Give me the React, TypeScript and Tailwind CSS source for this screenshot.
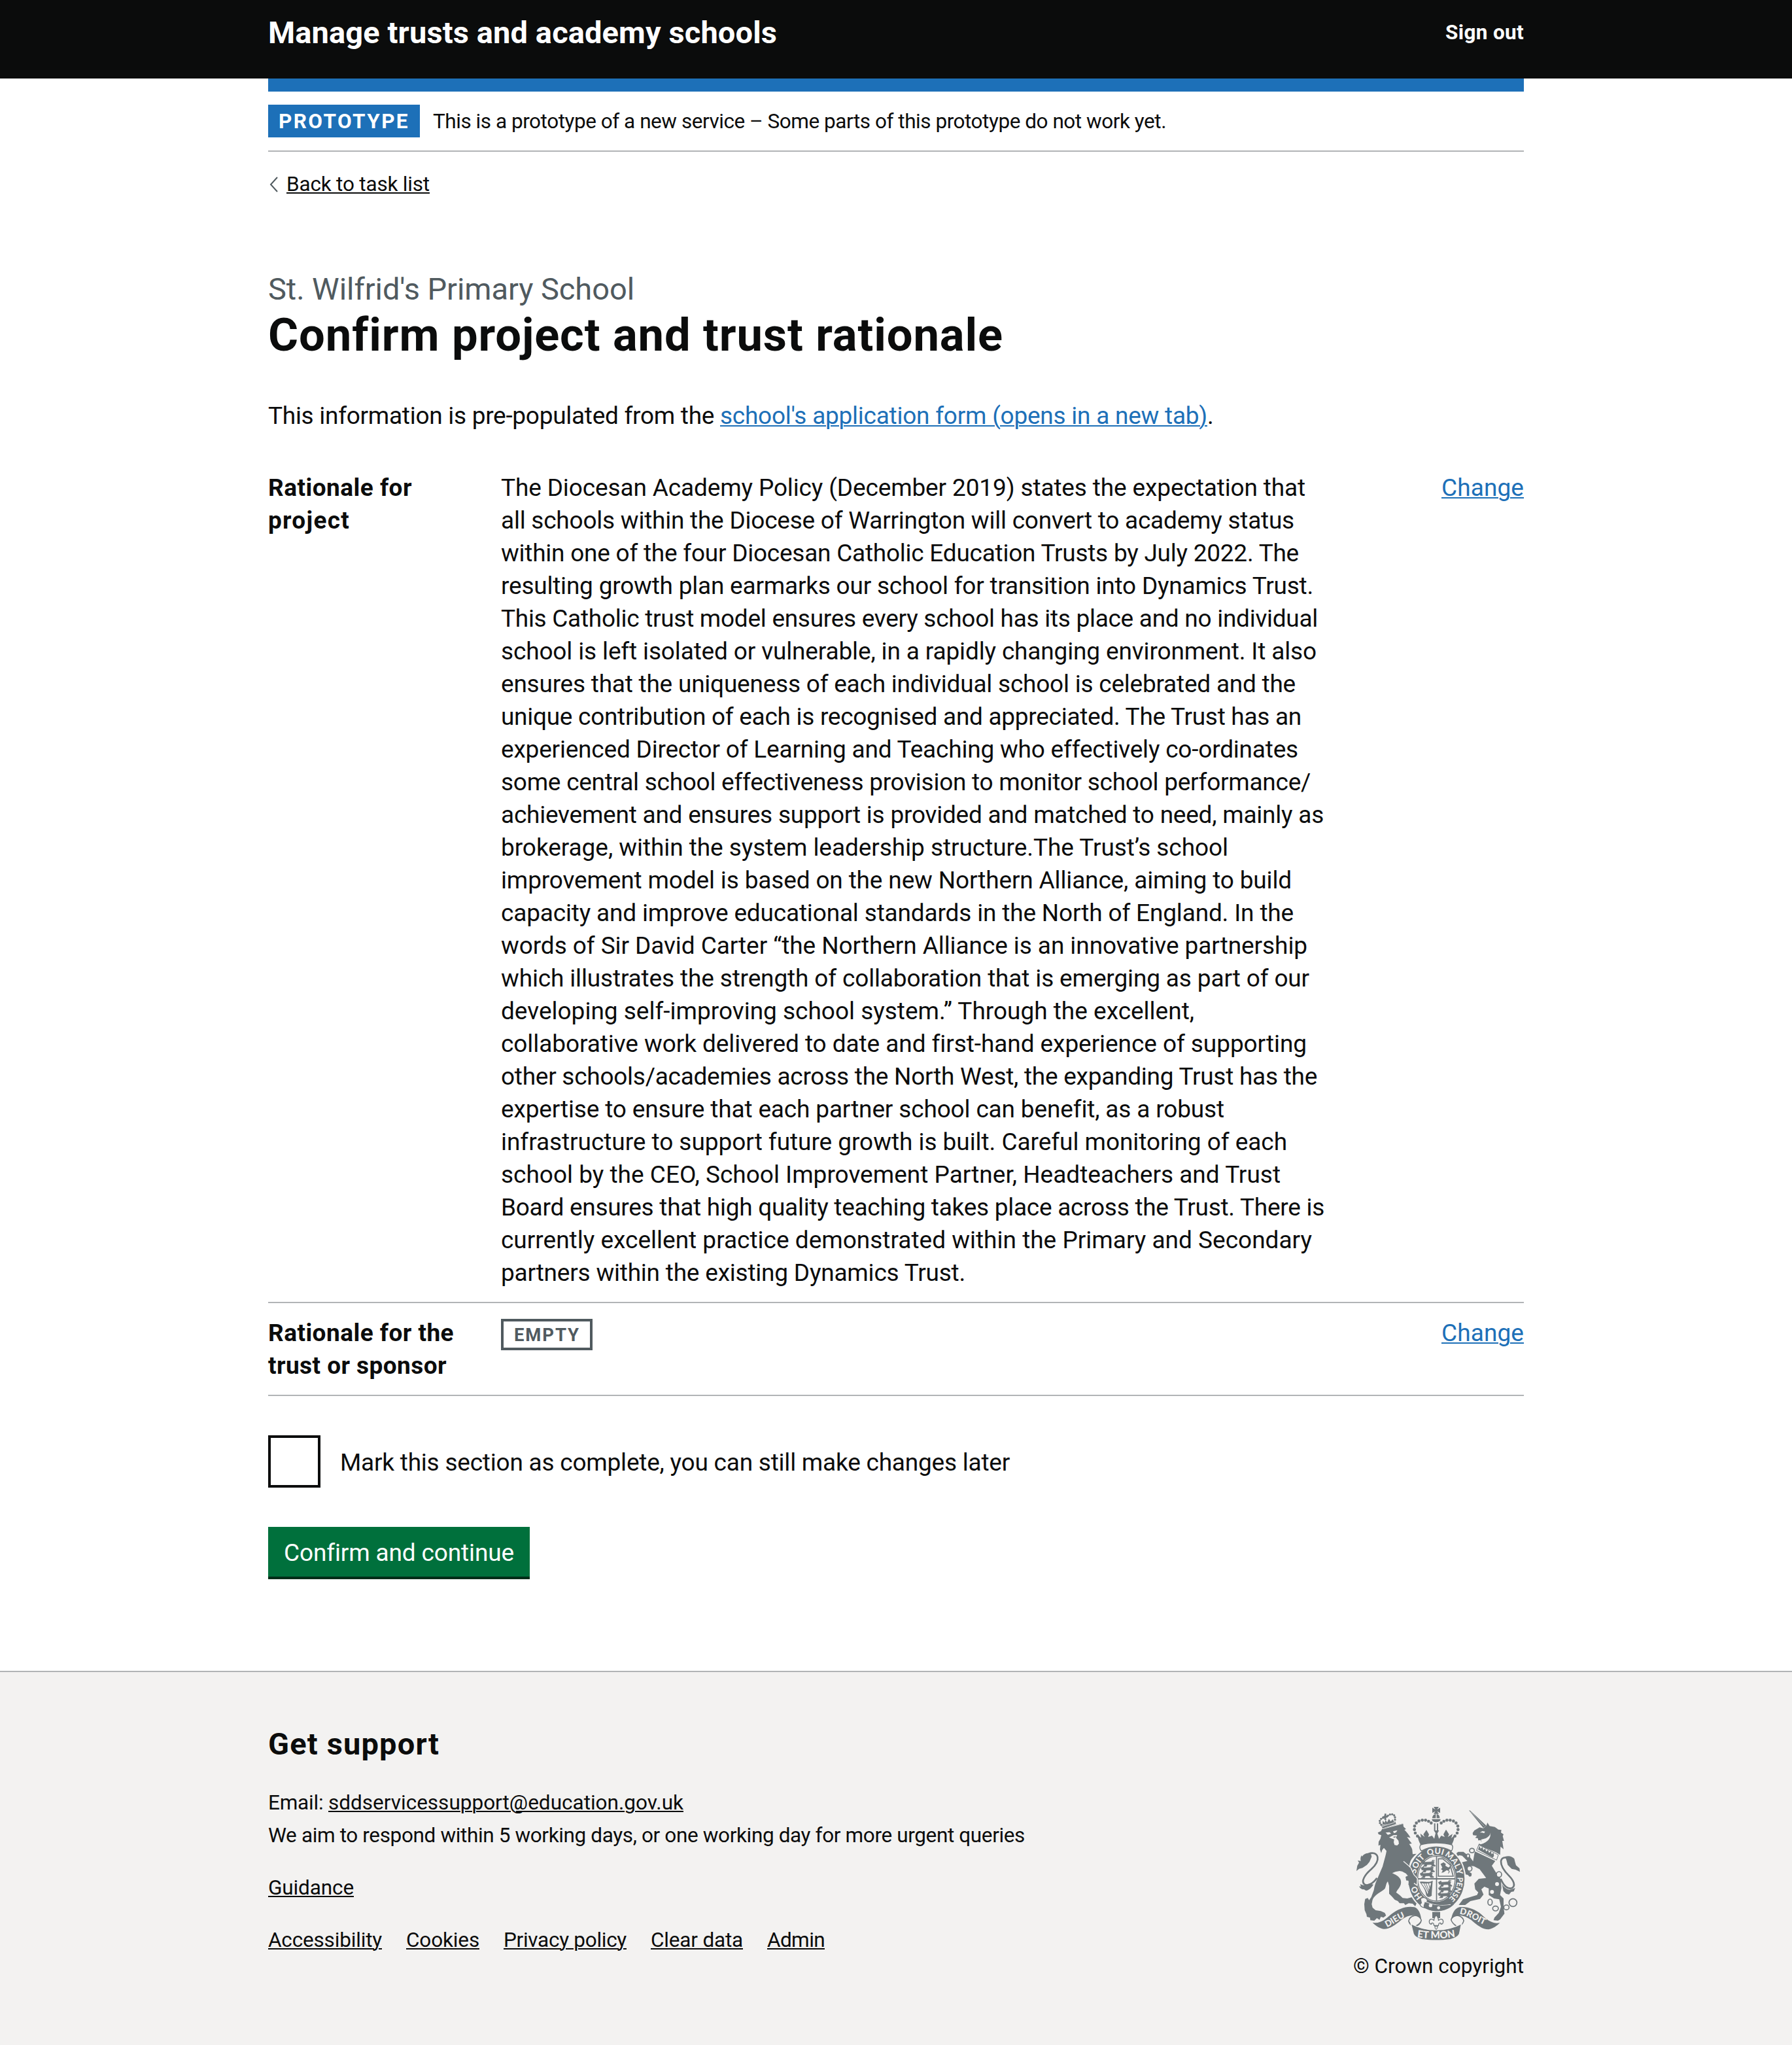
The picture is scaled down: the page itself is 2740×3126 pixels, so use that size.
import { useLayoutEffect, useRef, type ReactNode } from "react";

type FitProps = { w: number; className?: string; href?: string; children: string };

/** A single line of text whose letter spacing is tuned so that it spans `w` pixels. */
function Fit({ w, className = "", href, children }: FitProps) {
  const ref = useRef<HTMLElement | null>(null);
  useLayoutEffect(() => {
    const el = ref.current;
    if (!el) return;
    el.style.letterSpacing = "0px";
    const natural = el.getBoundingClientRect().width;
    el.style.letterSpacing = `${(w - natural) / children.length}px`;
  }, [w, children]);
  const Tag = (href ? "a" : "span") as "a";
  return (
    <Tag
      ref={(el: HTMLElement | null) => {
        ref.current = el;
      }}
      href={href}
      className={`inline-block whitespace-pre [font-variant-ligatures:none] ${className}`}
    >
      {children}
    </Tag>
  );
}

const LINK = "underline decoration-2 underline-offset-[2px]";

const RATIONALE: [string, number][] = [
  ["The Diocesan Academy Policy (December 2019) states the expectation that", 1230],
  ["all schools within the Diocese of Warrington will convert to academy status", 1213],
  ["within one of the four Diocesan Catholic Education Trusts by July 2022. The", 1220],
  ["resulting growth plan earmarks our school for transition into Dynamics Trust.", 1242],
  ["This Catholic trust model ensures every school has its place and no individual", 1249],
  ["school is left isolated or vulnerable, in a rapidly changing environment. It also", 1247],
  ["ensures that the uniqueness of each individual school is celebrated and the", 1215],
  ["unique contribution of each is recognised and appreciated. The Trust has an", 1224],
  ["experienced Director of Learning and Teaching who effectively co-ordinates", 1219],
  ["some central school effectiveness provision to monitor school performance/", 1238],
  ["achievement and ensures support is provided and matched to need, mainly as", 1258],
  ["brokerage, within the system leadership structure.The Trust’s school", 1112],
  ["improvement model is based on the new Northern Alliance, aiming to build", 1209],
  ["capacity and improve educational standards in the North of England. In the", 1212],
  ["words of Sir David Carter “the Northern Alliance is an innovative partnership", 1233],
  ["which illustrates the strength of collaboration that is emerging as part of our", 1236],
  ["developing self-improving school system.” Through the excellent,", 1060],
  ["collaborative work delivered to date and first-hand experience of supporting", 1232],
  ["other schools/academies across the North West, the expanding Trust has the", 1248],
  ["expertise to ensure that each partner school can benefit, as a robust", 1106],
  ["infrastructure to support future growth is built. Careful monitoring of each", 1202],
  ["school by the CEO, School Improvement Partner, Headteachers and Trust", 1192],
  ["Board ensures that high quality teaching takes place across the Trust. There is", 1259],
  ["currently excellent practice demonstrated within the Primary and Secondary", 1240],
  ["partners within the existing Dynamics Trust.", 710],
];

const FOOTER_LINKS: [string, number][] = [
  ["Accessibility", 174],
  ["Cookies", 112],
  ["Privacy policy", 188],
  ["Clear data", 141],
  ["Admin", 88],
];

function Row({ label, value, children }: { label: [string, number][]; value: string; children: ReactNode }) {
  return (
    <div className="flex border-b-2 border-[#b1b4b6] pt-px pb-[19px]">
      <dt className="flex w-[356px] flex-col items-start font-bold">
        {label.map(([t, w]) => (
          <Fit key={t} w={w}>
            {t}
          </Fit>
        ))}
      </dt>
      <dd className="flex flex-1 flex-col items-start">{children}</dd>
      <dd>
        <Fit w={126} href="#" className={`text-[#1d70b8] ${LINK}`}>
          {value}
        </Fit>
      </dd>
    </div>
  );
}

/** Beads of the imperial crown's arches. */
const BEADS: [number, number][] = [
  [382, 200], [372, 186], [368, 170], [369, 154], [377, 140], [389, 131], [404, 127], [419, 127], [433, 132], [445, 140],
];
/** Beads of the crown worn by the lion. */
const SMALL_BEADS: [number, number][] = [
  [216, 148], [210, 140], [209, 130], [215, 121], [224, 116], [247, 106], [256, 101], [266, 100], [275, 105], [279, 114], [279, 125],
];

function LionPassant({ x, y }: { x: number; y: number }) {
  return (
    <path
      transform={`translate(${x} ${y})`}
      d="M0 4l8-4 6 4 30-2 8-3 6 4-4 3 2 10 6 2 0 4h-14l-4-8-20 1-3 8H6l6-5 1-6-8 2zM8 1l3-4 3 5M10 15h12M40 14h12M44 0l6-6 10 2"
      stroke="#6f777b"
      strokeWidth={2}
    />
  );
}

function RoyalArms() {
  const bg = "#f3f2f1";
  const fg = "#6f777b";
  return (
    <svg viewBox="96 60 768 624" className="h-[208px] w-[256px]" fill={fg} aria-hidden="true">
      {/* Lion */}
      <path d="M222 164L316 142L318 157L330 168L322 171C334 184 343 194 350 208L334 204C342 216 349 225 356 234L344 236C351 245 356 254 358 262L360 283L378 281C366 291 356 302 350 314L345 330L372 382L376 415L361 409L354 408L352 424L340 424L343 408L332 404L328 388L338 384L330 372L312 362L300 360L280 364L266 370C280 376 296 384 304 398C310 414 306 430 290 448L284 458L300 470L314 484L335 486L358 480L374 488L388 500L388 516L378 508L372 522L360 510L342 508L326 516L320 508L300 508L292 498L278 492L264 476L252 464L252 428L246 408C238 414 238 432 232 442C214 458 186 468 176 492L172 512L176 528L190 540L214 544L232 552L238 564L226 574L214 570L208 584L196 576L184 588L166 586L164 574L150 570L148 558L140 540L138 512L142 488L154 484L160 494L170 480L182 448C184 428 192 408 202 386L222 340C230 310 236 292 240 268L228 254L220 264L216 278L210 262L212 240L203 244L204 226L212 212L216 196L204 192L200 184L214 178Z" />
      <g fill={bg}>
        <path d="M236 184l18-2 7 7-15 5zM270 178l20-5-6 10-10 4zM252 206l20-10 17-1-6 12 12 14 2 14-8 8-12-2-4-12 2-14-12-4z" />
      </g>
      <path d="M268 204l16-4-6 8z" />
      {/* Lion's crown */}
      <g>
        <path d="M216 153l64-20 4 12-62 19z" />
        <path d="M222 148l0-18 10 9 3-14 8 12 8-16 8 12 10-10 7 16zM232 96l8 2-2 8 8 0 0 8-8 2 1 10-8 0-2-9-8 0 0-7 8-2z" />
        {SMALL_BEADS.map(([x, y]) => (
          <circle key={`${x}-${y}`} cx={x} cy={y} r={5} />
        ))}
        <path d="M219 156l60-19" stroke={bg} strokeWidth={2.5} />
        <path d="M222 167L318 142" stroke={bg} strokeWidth={2.5} />
      </g>
      {/* Lion's tail */}
      <path
        d="M196 392c-18 26-42 38-56 30-20-14 2-46 30-70 26-24 32-40 29-56-4-18-24-22-42-14"
        fill="none"
        stroke={fg}
        strokeWidth={8}
      />
      <path d="M168 280c-16-4-30 0-40 14l-2-6c-6 8-6 18-4 26l-14-2 6 10-8 14-4 24 12-10 16-4 20-14 12-14 10-24zM160 418c-16 12-30 8-40 2l2 12-8-2c4 10 14 16 22 14l10 6c14-2 26-14 34-28z" />

      {/* Unicorn */}
      <path d="M618 82l6 1 74 69-14 11z" />
      <path d="M626 88l62 66" stroke={bg} strokeWidth={1.5} />
      <path d="M684 164l14-12 5-14 10 16 24 4 16 12 14 2-2 12 12 8-4 8 6 22-8 0 6 38-14-12-2 38-24-14-50-20-26-14 14-10-2-10-12 2-2-10-12-2 8-10-18-2-2-10 8-12 24-14z" />
      <path d="M716 186c4 22-10 42-44 52l-8-4 2-8 10 0-2-10 22-6c12-6 18-14 22-24zM668 184l12-7 12 2-4 8-10-3z" fill={bg} />
      <path d="M663 240l90 46-8 24-92-44z" fill={bg} stroke={fg} strokeWidth={3} />
      <path d="M660 262l6-18 6 14 8-8 4 14 9-7 4 14 9-8 4 14 9-8 3 14 9-6 2 14-6 8z" />
      <path d="M645 270l94 44-16 22 16 26 26 36 2 40-6 32 16 16v40l4 30-20 26-10 6-20-2 4-12 20-22 10-28-8-34-24-4-24-16v-30l-20-8-14 12 10 24-16 20-44 10-24 18-30 0 20-26 64-20 6-12-14-14-4-26 20-22 34-4-12-16-18-24-26-14-22-2-10 10 6 14 16 12-2 12-8 2-8-8-10-2-10-24-12-18 4-14 26-6-24-24-12-2-10 4-4-14 8-6 24 0 30 24 14 20z" />
      <g fill={bg} stroke={fg} strokeWidth={5}>
        <ellipse cx="632" cy="266" rx="11" ry="10" />
        <ellipse cx="614" cy="291" rx="7" ry="9" />
        <ellipse cx="621" cy="349" rx="11" ry="12" />
        <ellipse cx="756" cy="376" rx="12" ry="13" />
        <ellipse cx="715" cy="503" rx="10" ry="14" />
        <ellipse cx="740" cy="532" rx="13" ry="11" />
        <ellipse cx="790" cy="527" rx="12" ry="11" />
        <circle cx="820" cy="505" r="18" />
      </g>
      <g fill={bg}>
        <circle cx="747" cy="420" r="9" />
        <circle cx="724" cy="456" r="9" />
      </g>
      {/* Unicorn's tail */}
      <path
        d="M764 396c14 34 34 50 52 42 18-10 6-36-14-56-24-24-38-44-37-66 2-18 20-22 36-14"
        fill="none"
        stroke={fg}
        strokeWidth={8}
      />
      <path d="M784 294c18-6 34 0 42 10l4 16 4 14 16 14 2 16-20-10-18-4-18-18-6-22zM770 420c8 14 20 24 34 26l10-2 16-6-6 16-12 2-10 12-14-4-12-12z" />

      {/* Garter */}
      <ellipse cx="469" cy="396" rx="135" ry="154" fill={bg} />
      <ellipse cx="469" cy="396" rx="129" ry="148" />
      <ellipse cx="469" cy="395" rx="90" ry="107" fill={bg} />
      <ellipse cx="469" cy="395" rx="86" ry="103" fill={bg} stroke={fg} strokeWidth={4} />
      <path d="M467 292h5v204h-5zM383 393h172v6H383z" />
      {/* Quarters */}
      <LionPassant x={402} y={316} />
      <LionPassant x={398} y={342} />
      <LionPassant x={394} y={368} />
      <LionPassant x={478} y={408} />
      <LionPassant x={478} y={434} />
      <LionPassant x={476} y={460} />
      <path d="M478 304h20l34 28 14 52h-68z" fill="none" stroke={fg} strokeWidth={5} />
      <path d="M488 328l14-8 10 8-2 8 14 8 10-8-2 14-6 4 4 10-8 10 4-14-10-4-14 10-10 2 6-10-8-6 6-8z" />
      <path d="M392 410c20-4 40 6 60-6l-6 70c-10 8-20 6-24-4-4-26-14-38-30-60zm8 6c10 14 22 28 28 50l18-52c-14 6-30 2-46 2z" />
      <path d="M410 414l22 44M420 414l16 40M432 414l8 28M446 414v60" stroke={fg} strokeWidth={3} />
      {/* Motto */}
      <path id="garter" pathLength={100} fill="none" d="M469 508A96 113 0 0 1 469 282A96 113 0 0 1 469 508" />
      <g fill={bg} fontFamily="Lato, sans-serif" fontWeight={900} fontSize={38} textAnchor="middle">
        <text><textPath href="#garter" startOffset="15.5%">HO</textPath></text>
        <text><textPath href="#garter" startOffset="35%">SOIT</textPath></text>
        <text><textPath href="#garter" startOffset="49.3%">QUI</textPath></text>
        <text><textPath href="#garter" startOffset="62%">MAL</textPath></text>
        <text><textPath href="#garter" startOffset="70.5%">Y</textPath></text>
        <text fontSize={35}><textPath href="#garter" startOffset="82.3%">PENSE</textPath></text>
      </g>
      {/* Buckle */}
      <path d="M396 488c10-12 26-6 32 6l-6 14c-8 2-12 12-8 20-12 0-20-8-20-16l6-6z" fill={bg} stroke={fg} strokeWidth={4} />
      <path d="M418 500c30 16 70 22 116 14" fill="none" stroke={bg} strokeWidth={3} />
      <path d="M416 502c36 18 80 18 118 14l16-4c-20 22-50 32-80 32-24 0-44-8-60-22z" />
      <g fill={bg}>
        <circle cx="442" cy="518" r="8" />
        <circle cx="479" cy="529" r="7" />
      </g>
      {/* Lion's forepaw, resting on the garter */}
      <path d="M324 326L350 346L364 378L380 396L378 424L366 414L358 408L352 428L340 422L344 406L330 402L328 386L338 382L326 362Z" />
      <path d="M318 316L350 343L366 377L382 395L380 426L366 416" fill="none" stroke={bg} strokeWidth={4} />

      {/* Imperial crown */}
      <path d="M383 194l16 14-4-20 20 16-6-12 14-20 12 20-4 12 18-6 10 14 6-26-8-12h24l-8 14 8 24 10-14 16 6-6-12 12-22 14 22-6 12 22-14-6 20 16-16c-2 20-8 34-14 46-40-10-100-10-142 0-8-14-14-30-14-42z" />
      <path d="M396 240c40-12 104-12 144 0 6 8 4 18-2 28-46-24-94-24-138 0-8-8-8-20-4-28z" fill={bg} stroke={fg} strokeWidth={4} />
      {BEADS.map(([x, y]) => (
        <g key={x + y * 1000}>
          <circle cx={x} cy={y} r={7} />
          <circle cx={936 - x} cy={y} r={7} />
        </g>
      ))}
      <path d="M458 142h6v32h-6zM471 142h6v32h-6zM448 122h40c0 18-40 18-40 0zM450 118c0-10 6-18 16-19v19zM484 118c0-10-4-18-14-19v19zM456 66h24l-8 12 14-8v24l-14-8 8 12h-24l8-12-14 8V70l14 8z" />

      {/* Scrolls */}
      <path d="M176 596c34 8 58-14 86-38 30-24 72-40 106-32 20 6 30 34 32 62-8 16-18 24-30 30-14-4-28-14-30-28 2-16 18-24 34-26-24-4-44 4-66 20-28 24-54 42-80 42-22-4-40-16-52-30z" />
      <path d="M374 565c12 4 22 10 24 22-6 12-18 20-28 24-12-4-24-12-26-22 2-12 16-22 30-24z" fill={bg} />
      <path d="M372 564c-20 2-30 14-30 26 4 14 16 22 28 26 16-6 28-16 30-30-4-12-14-20-28-22z" fill="none" stroke={fg} strokeWidth={4} />
      <path d="M760 598c-36 6-58-14-86-40-28-22-64-36-100-32-22 6-32 28-38 58 8 16 18 26 32 32 14-4 26-14 28-28-2-14-14-22-30-24 22-2 42 6 62 20 28 24 52 44 80 44 20-4 38-16 52-30z" />
      <path d="M564 565c-12 4-22 8-26 20 6 14 18 22 30 28 12-4 22-12 24-24-2-12-14-22-28-24z" fill={bg} />
      <path d="M566 564c-18 2-28 10-30 20 6 16 18 26 30 32 16-6 26-16 28-28-2-12-14-22-28-24z" fill="none" stroke={fg} strokeWidth={4} />
      <path d="M352 602c70 38 162 38 232 0l-10 48c-8 14-24 20-40 24-42 6-90 6-132 0-16-4-32-12-38-24z" stroke={bg} strokeWidth={4} />
      <path id="dieu" fill="none" d="M242 618C280 602 305 570 372 560" />
      <path id="etmon" fill="none" d="M362 660Q469 680 574 658" />
      <path id="droit" fill="none" d="M574 558C620 560 650 596 726 622" />
      <g fill={bg} fontFamily="Lato, sans-serif" fontWeight={900}>
        <text fontSize={40}><textPath href="#dieu">DIEU</textPath></text>
        <text fontSize={45} textAnchor="middle"><textPath href="#etmon" startOffset="50%">ET MON</textPath></text>
        <text fontSize={40}><textPath href="#droit">DROIT</textPath></text>
      </g>
      {/* Fleur-de-lis */}
      <path d="M450 548h36v28h-36z" />
      <path
        d="M468 562c-8 10-12 18-10 26-8-12-22-8-22 4 0 8 4 12 10 12 0-6 6-8 10-2l2 8h20l2-8c4-6 10-4 10 2 6 0 10-4 10-12 0-12-14-16-22-4 2-8-2-16-10-26zM460 610l8 16 8-16"
        fill={bg}
        stroke={fg}
        strokeWidth={4}
      />
      <circle cx="468" cy="620" r="6" fill={bg} stroke={fg} strokeWidth={3} />
    </svg>
  );
}

export default function App() {
  return (
    <div className="flex min-h-[3126px] w-full flex-col bg-white font-['Roboto',sans-serif] text-[37px] leading-[50px] text-[#0b0c0c]">
      <header className="h-[120px] bg-[#0b0c0c] text-white">
        <div className="mx-auto flex w-[1920px] items-start justify-between pt-[25px] font-bold">
          <Fit w={778} className="text-[47px]">
            Manage trusts and academy schools
          </Fit>
          <Fit w={120} href="#" className="text-[31.5px]">
            Sign out
          </Fit>
        </div>
      </header>

      <div className="mx-auto w-[1920px]">
        <div className="h-5 bg-[#1d70b8]" />
        <div className="flex h-[92px] items-start gap-[20px] border-b-2 border-[#b1b4b6] pt-5 text-[31.5px]">
          <strong className="flex h-[50px] w-[232px] bg-[#1d70b8] pt-px pl-4 text-white">
            <Fit w={200}>PROTOTYPE</Fit>
          </strong>
          <Fit w={1121} className="mt-px">
            This is a prototype of a new service – Some parts of this prototype do not work yet.
          </Fit>
        </div>

        <div className="flex items-center gap-[13px] pt-[30px] pl-[2px] text-[31.5px] leading-10">
          <svg viewBox="0 0 13 24" className="h-6 w-[13px]" fill="none" stroke="#505a5f" strokeWidth="2">
            <path d="M12 1L2 12l10 11" />
          </svg>
          <Fit w={219} href="#" className={LINK}>
            Back to task list
          </Fit>
        </div>

        <main>
          <h1 className="mt-[110px] flex flex-col items-start">
            <Fit w={560} className="text-[47px] leading-[60px] text-[#505a5f]">
              St. Wilfrid's Primary School
            </Fit>
            <Fit w={1124} className="mt-[2px] text-[70.5px] leading-[76px] font-bold">
              Confirm project and trust rationale
            </Fit>
          </h1>

          <p className="mt-[61px] whitespace-nowrap">
            <Fit w={691}>{"This information is pre-populated from the "}</Fit>
            <Fit w={745} href="#" className={`text-[#1d70b8] ${LINK}`}>
              school's application form (opens in a new tab)
            </Fit>
            .
          </p>

          <dl className="mt-[59px] flex flex-col gap-5">
            <Row label={[["Rationale for", 220], ["project", 125]]} value="Change">
              {RATIONALE.map(([t, w]) => (
                <Fit key={t} w={w}>
                  {t}
                </Fit>
              ))}
            </Row>
            <Row label={[["Rationale for the", 284], ["trust or sponsor", 273]]} value="Change">
              <strong className="mt-[3px] flex h-12 w-[140px] border-4 border-[#505a5f] pt-px pl-4 text-[27.5px] leading-10 text-[#505a5f]">
                <Fit w={101}>EMPTY</Fit>
              </strong>
            </Row>
          </dl>

          <label className="mt-[60px] flex h-20 items-start gap-[30px]">
            <span className="h-20 w-20 border-4 border-[#0b0c0c]" />
            <Fit w={1024} className="mt-[17px]">
              Mark this section as complete, you can still make changes later
            </Fit>
          </label>

          <button className="mt-[60px] flex h-20 w-[400px] items-start border-b-4 border-[#002d18] bg-[#00703c] pt-[15px] pl-6 text-white">
            <Fit w={352}>Confirm and continue</Fit>
          </button>
        </main>
      </div>

      <footer className="mt-[140px] flex-1 border-t-2 border-[#b1b4b6] bg-[#f3f2f1] text-[31.5px]">
        <div className="mx-auto flex w-[1920px] justify-between">
          <div className="pt-[85px]">
            <h2 className="flex">
              <Fit w={262} className="text-[47px] font-bold">
                Get support
              </Fit>
            </h2>
            <ul className="mt-[40px]">
              <li className="flex">
                <Fit w={92}>{"Email: "}</Fit>
                <Fit w={543} href="#" className={LINK}>
                  sddservicessupport@education.gov.uk
                </Fit>
              </li>
              <li className="flex">
                <Fit w={1157}>We aim to respond within 5 working days, or one working day for more urgent queries</Fit>
              </li>
            </ul>
            <div className="mt-[30px] flex">
              <Fit w={131} href="#" className={LINK}>
                Guidance
              </Fit>
            </div>
            <div className="mt-[30px] flex gap-[37px]">
              {FOOTER_LINKS.map(([t, w]) => (
                <Fit key={t} w={w} href="#" className={LINK}>
                  {t}
                </Fit>
              ))}
            </div>
          </div>
          <div className="flex flex-col items-end pt-[204px]">
            <div className="mr-[2px] flex">
              <RoyalArms />
            </div>
            <Fit w={261} href="#" className="mt-[13px]">
              © Crown copyright
            </Fit>
          </div>
        </div>
      </footer>
    </div>
  );
}
